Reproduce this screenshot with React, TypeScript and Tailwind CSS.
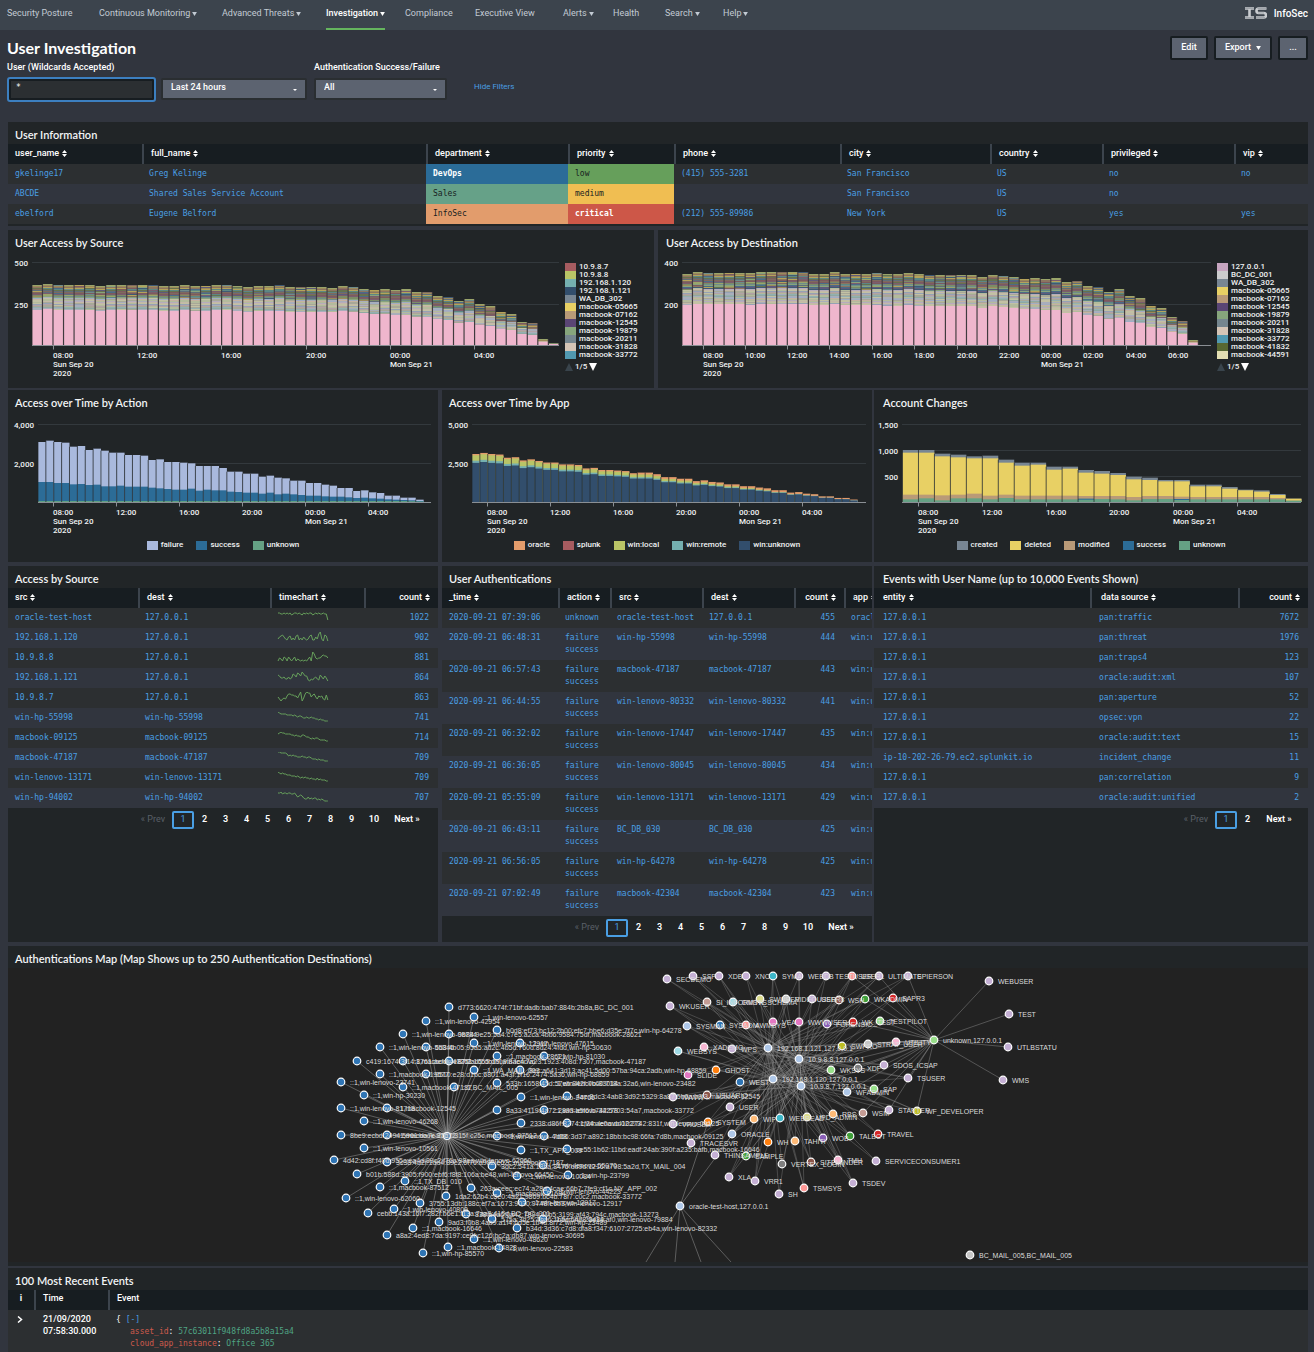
import React from "react";

const MONO = "font-['DejaVu_Sans_Mono',monospace]";

/* ---------- navigation ---------- */

const NAV: { label: string; menu?: boolean; active?: boolean; w: string }[] = [
  { label: "Security Posture", w: "w-[92px]" },
  { label: "Continuous Monitoring", menu: true, w: "w-[123px]" },
  { label: "Advanced Threats", menu: true, w: "w-[104px]" },
  { label: "Investigation", menu: true, active: true, w: "w-[79px]" },
  { label: "Compliance", w: "w-[70px]" },
  { label: "Executive View", w: "w-[88px]" },
  { label: "Alerts", menu: true, w: "w-[50px]" },
  { label: "Health", w: "w-[52px]" },
  { label: "Search", menu: true, w: "w-[58px]" },
  { label: "Help", menu: true, w: "w-[50px]" },
];

function Caret() {
  return (
    <svg viewBox="0 0 6 5" className="mb-px h-[4px] w-[5px]" fill="currentColor" aria-hidden="true">
      <path d="M0 0h6L3 5z" />
    </svg>
  );
}

function Logo() {
  return (
    <svg viewBox="0 0 22 12" className="h-3 w-[22px]" fill="none" aria-hidden="true">
      <path
        d="M0 1.500h9M0 10.500h9M4.500 1v10M21.500 1.500h-8q-2 0-2 2.200t2 2.300h5.500q2 0 2 2.250t-2 2.250h-8"
        stroke="#c9ccd0"
        strokeWidth="2.600"
      />
      <path d="M0 1.500h9M0 10.500h9M12.500 1.500h9M13 6h6M11 10.500h9" stroke="#858b92" strokeWidth="0.600" />
    </svg>
  );
}

function NavBar() {
  return (
    <nav className="flex h-[30px] items-stretch justify-between bg-[#3c444d] pr-[6px] pl-[7px] text-[9px] text-[#c3cbd4]">
      <div className="flex">
        {NAV.map((n) => (
          <div key={n.label} className={`flex ${n.w} shrink-0`}>
            <a
              href="#"
              className={`flex items-center gap-[2px] border-b-2 whitespace-nowrap ${
                n.active ? "border-[#65b55e] font-medium text-white" : "border-transparent"
              }`}
            >
              {n.label}
              {n.menu && <Caret />}
            </a>
          </div>
        ))}
      </div>
      <a href="#" className="flex items-center gap-[7px] pb-1 text-[10px] font-medium text-white">
        <Logo />
        InfoSec
      </a>
    </nav>
  );
}

/* ---------- shared pieces ---------- */

function Panel({ title, children, className = "", pad = "pl-[7px]" }: { title: string; children: React.ReactNode; className?: string; pad?: string }) {
  return (
    <section className={`min-w-0 overflow-hidden bg-[#212527] ${className}`}>
      <h2 className={`h-[22px] ${pad} pt-[5px] font-['Lato',sans-serif] text-[11px] leading-4 font-semibold whitespace-nowrap text-[#f2f4f5]`}>{title}</h2>
      {children}
    </section>
  );
}

function SortIcon() {
  return (
    <svg viewBox="0 0 5 7" className="ml-[3px] inline-block h-[7px] w-[5px] align-[-1px]" fill="currentColor" aria-hidden="true">
      <path d="M0 3h5L2.500 0zM0 4h5L2.500 7z" />
    </svg>
  );
}

type Col = { name: string; w: string; right?: boolean };

function DataTable({ cols, rows, pad = "pl-[7px]", width = "w-full" }: { cols: Col[]; rows: React.ReactNode[][]; pad?: string; width?: string }) {
  return (
    <table className={`${width} table-fixed border-collapse`}>
      <colgroup>
        {cols.map((c) => (
          <col key={c.name} className={c.w} />
        ))}
      </colgroup>
      <thead>
        <tr className="h-5 bg-[#171d21] text-[9px] text-white">
          {cols.map((c, i) => (
            <th key={c.name} scope="col" className="p-0 text-left align-top font-medium">
              <div
                className={`h-5 pt-[3px] leading-3 whitespace-nowrap ${pad} ${i ? "border-l-2 border-[#3c444d]" : ""} ${
                  c.right ? "pr-2 text-right" : ""
                }`}
              >
                {c.name}
                <SortIcon />
              </div>
            </th>
          ))}
        </tr>
      </thead>
      <tbody className={`${MONO} text-[8px] leading-3 text-[#4a9fe3]`}>
        {rows.map((r, k) => (
          <tr key={k} className={k % 2 ? "bg-[#31353e]" : "bg-[#2c2f31]"}>
            {r.map((cell, i) =>
              React.isValidElement(cell) && cell.type === "td" ? (
                cell
              ) : (
                <td key={i} className={`pt-1 pb-1 align-top whitespace-pre ${pad} ${cols[i].right ? "pr-[9px] text-right" : ""}`}>
                  {cell}
                </td>
              )
            )}
          </tr>
        ))}
      </tbody>
    </table>
  );
}

function Pager({ pages, pad = "pr-3" }: { pages: number; pad?: string }) {
  return (
    <nav className={`flex h-6 items-center justify-end ${pad} text-[9px] font-semibold text-white`} aria-label="Pagination">
      <button type="button" disabled className="mr-[7px] font-normal text-[#5a6068]">« Prev</button>
      <button type="button" className="h-[18px] w-[22px] rounded-[2px] border-2 border-[#4a9fe3] font-normal text-[#4a9fe3]">1</button>
      {Array.from({ length: pages - 1 }, (_, i) => (
        <button type="button" key={i} className={`text-center ${i === 8 ? "w-6" : "w-[21px]"}`}>
          {i + 2}
        </button>
      ))}
      <button type="button" className="ml-[2px] w-[38px] text-center whitespace-nowrap">Next »</button>
    </nav>
  );
}

/* ---------- charts ---------- */

type Tick = { x: number; lines: string[] };

function Axis({ x0, x1, base, grid, ticks, step }: { x0: number; x1: number; base: number; grid: [number, string][]; ticks: Tick[]; step: number }) {
  return (
    <g fontSize="8" fill="#f0f2f3" fontWeight="500">
      {grid.map(([y, label]) => (
        <text key={label} x={x0 - 4} y={y + 3} textAnchor="end">
          {label}
        </text>
      ))}
      <path d={`M${x0} ${base}H${x1}`} stroke="#8a8f94" />
      {ticks.map((t) => (
        <g key={t.x}>
          <path d={`M${t.x + 0.5} ${base}v4`} stroke="#8a8f94" />
          {t.lines.map((l, i) => (
            <text key={l} x={t.x} y={base + 12 + i * step}>
              {l}
            </text>
          ))}
        </g>
      ))}
    </g>
  );
}

function Grid({ x0, x1, ys }: { x0: number; x1: number; ys: number[] }) {
  return <path d={ys.map((y) => `M${x0} ${y}H${x1}`).join("")} stroke="#33393d" />;
}

const SUN = ["08:00", "Sun Sep 20", "2020"];
const MON = ["00:00", "Mon Sep 21"];

const DEEP = ["#9aa56a", "#4a6c87", "#7b8c66", "#7f6a5e", "#5c8784", "#9c8a5a", "#5f5a7c", "#6f8c8a", "#7d5a5e", "#65724e", "#8c7560", "#3f5a75", "#88a37c", "#7a5d6e", "#5f6d7a", "#b5a35a"];
const PALE = ["#a9aebb", "#c4b9a8", "#93b0b2", "#b3bb9c", "#b3a2a6", "#a0adc4", "#c2c1a4", "#8ea9a2", "#b6acbd", "#a8a898", "#c6b2a0", "#95a1b5"];

function stripes(seed: number, n: number) {
  let s = seed * 7919 + 17;
  const out: string[] = [];
  for (let i = 0; i < n; i++) {
    s = (s * 1103515245 + 12345) % 2147483648;
    const k = Math.floor(s / 65536);
    const pal = i < n * 0.5 ? DEEP : PALE;
    out.push(pal[(k % 3 === 0 ? k : i * 5) % pal.length]);
  }
  return out;
}

function HostBars({ x0, base, heights, shift }: { x0: number; base: number; heights: number[]; shift: number }) {
  const pitch = 10.54;
  return (
    <g>
      {heights.map((h, i) => {
        if (h <= 0) return null;
        const x = x0 + i * pitch + 0.5;
        const share = i < 30 ? 0.585 - shift - i * 0.0005 : 0.57 - shift - (i - 30) * 0.006;
        const pink = Math.round(h * share);
        const top = base - h;
        const n = Math.max(1, Math.round(h - pink));
        return (
          <g key={i}>
            <rect x={x - 0.5} y={top} width={pitch} height={h} fill="#55494f" opacity="0.75" />
            <rect x={x} y={base - pink} width={pitch - 1.2} height={pink} fill="#efb6cd" />
            {stripes(i + 1, n).map((c, k) => (
              <rect key={k} x={x} y={top + k} width={pitch - 1.2} height="1" fill={c} />
            ))}
          </g>
        );
      })}
    </g>
  );
}

const SRC_TOPS = [171, 168, 171, 171, 171, 171, 174, 171, 171, 171, 171, 171, 174, 174, 171, 174, 174, 171, 171, 174, 177, 174, 174, 171, 177, 177, 177, 177, 180, 174, 177, 182, 186, 183, 186, 183, 192, 192, 204, 207, 219, 213, 228, 235, 252, 258, 282, 286, 333, 346];
const DST_TOPS = [139, 133, 136, 134, 134, 134, 136, 133, 133, 133, 133, 133, 139, 139, 133, 139, 139, 138, 135, 138, 138, 135, 138, 141, 141, 141, 141, 141, 147, 141, 144, 147, 153, 150, 153, 150, 162, 159, 174, 177, 192, 183, 204, 210, 234, 240, 267, 278, 336, 351];
const toHeights = (tops: number[], zero: number) => tops.map((t) => Math.round((zero - t) / 3));

const SRC_LEGEND: [string, string][] = [
  ["10.9.8.7", "#a65c60"], ["10.9.8.8", "#b8c466"], ["192.168.1.120", "#75b0b0"], ["192.168.1.121", "#324e6c"],
  ["WA_DB_302", "#788693"], ["macbook-05665", "#e8d064"], ["macbook-07162", "#b99a77"], ["macbook-12545", "#5a4575"],
  ["macbook-19879", "#86a57c"], ["macbook-20211", "#75868f"], ["macbook-31828", "#d5c5b6"], ["macbook-33772", "#5199b1"],
];
const DST_LEGEND: [string, string][] = [
  ["127.0.0.1", "#c6a5c0"], ["BC_DC_001", "#cbcccd"], ["WA_DB_302", "#788693"], ["macbook-05665", "#e8d064"],
  ["macbook-07162", "#b99a77"], ["macbook-12545", "#5a4575"], ["macbook-19879", "#86a57c"], ["macbook-20211", "#75868f"],
  ["macbook-31828", "#d5c5b6"], ["macbook-33772", "#5199b1"], ["macbook-41832", "#586832"], ["macbook-44591", "#e3deb2"],
];

function SideLegend({ items, width }: { items: [string, string][]; width: string }) {
  return (
    <div className={`${width} shrink-0 pt-[11px] text-[8px] font-medium text-[#f0f2f3]`}>
      <ul>
        {items.map(([label, color]) => (
          <li key={label} className="flex h-2 items-center gap-[3px] leading-[8px] whitespace-nowrap">
            <span className="h-2 w-[11px]" style={{ backgroundColor: color }} />
            {label}
          </li>
        ))}
      </ul>
      <div className="flex h-4 items-center gap-[2px]">
        <button type="button" aria-label="Previous legend page" className="text-[#39444c]">
          <svg viewBox="0 0 8 8" className="size-2" fill="currentColor"><path d="M4 0l4 8H0z" /></svg>
        </button>
        1/5
        <button type="button" aria-label="Next legend page" className="text-white">
          <svg viewBox="0 0 8 8" className="size-2" fill="currentColor"><path d="M4 8L0 0h8z" /></svg>
        </button>
      </div>
    </div>
  );
}

const hours = (xs: number[], labels: string[]): Tick[] =>
  xs.map((x, i) => ({ x, lines: labels[i] === "08:00" ? SUN : labels[i] === "00:00" ? MON : [labels[i]] }));
const FOUR = ["08:00", "12:00", "16:00", "20:00", "00:00", "04:00"];

function SourceChart() {
  return (
    <div className="flex">
      <svg viewBox="8 252 557 136" className="min-w-0 flex-1" role="img" aria-label="User access by source">
        <Grid x0={32} x1={559} ys={[262.5, 304.5]} />
        <HostBars x0={32} base={345} heights={toHeights(SRC_TOPS, 351)} shift={0} />
        <Axis x0={32} x1={559} base={345.5} step={9} grid={[[262.5, "500"], [304.5, "250"]]} ticks={hours([53, 137, 221, 306, 390, 474], FOUR)} />
      </svg>
      <SideLegend items={SRC_LEGEND} width="w-[89px]" />
    </div>
  );
}

function DestinationChart() {
  return (
    <div className="flex">
      <svg viewBox="658 252 559 136" className="min-w-0 flex-1" role="img" aria-label="User access by destination">
        <Grid x0={682} x1={1211} ys={[262.5, 304.5]} />
        <HostBars x0={682} base={345} heights={toHeights(DST_TOPS, 351)} shift={0.02} />
        <Axis
          x0={682}
          x1={1211}
          base={345.5}
          step={9}
          grid={[[262.5, "400"], [304.5, "200"]]}
          ticks={hours(
            [703, 745, 787, 829, 872, 914, 957, 999, 1041, 1083, 1126, 1168],
            ["08:00", "10:00", "12:00", "14:00", "16:00", "18:00", "20:00", "22:00", "00:00", "02:00", "04:00", "06:00"]
          )}
        />
      </svg>
      <SideLegend items={DST_LEGEND} width="w-[91px]" />
    </div>
  );
}

const ACTION_TOPS = [163, 159, 163, 165, 177, 175, 187, 183, 189, 195, 195, 202, 202, 204, 217, 215, 223, 223, 225, 227, 235, 235, 235, 241, 252, 252, 258, 258, 267, 264, 270, 272, 279, 279, 286, 286, 291, 294, 301, 301, 310, 308, 314, 316, 324, 324, 330, 330, 336, 343];
const SUCCESS_TOPS = [283, 283, 286, 286, 290, 289, 292, 291, 296, 296, 294, 297, 297, 297, 300, 302, 304, 306, 306, 303, 309, 306, 308, 308, 312, 313, 315, 315, 318, 315, 320, 318, 320, 322, 324, 324, 326, 327, 327, 329, 331, 330, 332, 333, 335, 336, 337, 338, 340, 343];

/* Each layer gives the height of its upper edge; later layers are painted over earlier ones. */
function Stack({ x0, base, pitch, layers }: { x0: number; base: number; pitch: number; layers: { color: string; h: number[] }[] }) {
  return (
    <g>
      {layers[0].h.map((_, i) => (
        <g key={i}>
          {layers.map((l, k) => (
            <rect key={k} x={x0 + i * pitch} y={base - l.h[i]} width={pitch} height={Math.max(0, l.h[i])} fill={l.color} />
          ))}
          <rect x={x0 + i * pitch - 0.5} y={base - layers[0].h[i]} width="1" height={Math.max(0, layers[0].h[i])} fill="#212527" opacity="0.7" />
        </g>
      ))}
    </g>
  );
}

function BottomLegend({ items }: { items: [string, string][] }) {
  return (
    <ul className="flex h-6 justify-center gap-[13px] pt-[2px] text-[8px] leading-[10px] font-medium text-[#f0f2f3]">
      {items.map(([label, color]) => (
        <li key={label} className="flex h-[10px] items-center gap-[3px]">
          <span className="h-[9px] w-[11px]" style={{ backgroundColor: color }} />
          {label}
        </li>
      ))}
    </ul>
  );
}

function ActionChart() {
  return (
    <>
      <svg viewBox="8 412 430 126" className="block w-full" role="img" aria-label="Access over time by action">
        <Grid x0={38} x1={431} ys={[424.5, 463.5]} />
        <Stack
          x0={38}
          base={502}
          pitch={7.87}
          layers={[
            { color: "#a9b9dd", h: ACTION_TOPS.map((t) => (343 - t) / 3) },
            { color: "#2c6c97", h: SUCCESS_TOPS.map((t) => (343 - t) / 3) },
            { color: "#5fa083", h: SUCCESS_TOPS.map((t) => Math.min(1, (343 - t) / 6)) },
          ]}
        />
        <Axis x0={38} x1={431} base={502.5} step={9} grid={[[424.5, "4,000"], [463.5, "2,000"]]} ticks={hours([53, 116, 179, 242, 305, 368], FOUR)} />
      </svg>
      <BottomLegend items={[["failure", "#a9b9dd"], ["success", "#2c6c97"], ["unknown", "#65a184"]]} />
    </>
  );
}

function AppChart() {
  const total = ACTION_TOPS.map((t) => ((343 - t) / 3) * 0.8);
  return (
    <>
      <svg viewBox="442 412 430 126" className="block w-full" role="img" aria-label="Access over time by app">
        <Grid x0={472} x1={866} ys={[424.5, 463.5]} />
        <Stack
          x0={472}
          base={502}
          pitch={7.87}
          layers={[
            { color: "#e39c6b", h: total.map((t, i) => t + (i > 20 && t > 0 ? 0.6 : 0)) },
            { color: "#b9c466", h: total.map((t) => Math.max(0, t - 1.3)) },
            { color: "#75b0b0", h: total.map((t) => t * 0.86) },
            { color: "#324e6c", h: total.map((t) => t * 0.815) },
          ]}
        />
        <Axis x0={472} x1={866} base={502.5} step={9} grid={[[424.5, "5,000"], [463.5, "2,500"]]} ticks={hours([487, 550, 613, 676, 739, 802], FOUR)} />
      </svg>
      <BottomLegend items={[["oracle", "#e39c6b"], ["splunk", "#a65c60"], ["win:local", "#b9c466"], ["win:remote", "#75b0b0"], ["win:unknown", "#324e6c"]]} />
    </>
  );
}

const CREATED = [187, 187, 198, 201, 206, 204, 216, 225, 225, 237, 237, 247, 250, 256, 267, 270, 277, 277, 291, 291, 298, 306, 308, 319, 333];
const DELETED = [195, 195, 206, 209, 212, 212, 225, 234, 231, 246, 243, 255, 258, 262, 275, 277, 281, 281, 296, 296, 303, 308, 312, 322, 333];
const MODIFIED = [321, 321, 323, 321, 318, 324, 321, 324, 324, 324, 324, 325, 325, 325, 328, 325, 325, 327, 328, 328, 328, 328, 328, 331, 339];
const UNKNOWN = [335, 332, 338, 332, 332, 335, 331, 335, 335, 335, 335, 336, 334, 335, 338, 334, 334, 337, 335, 335, 335, 335, 335, 335, 339];

function ChangesChart() {
  const h = (a: number[]) => a.map((t) => (343 - t) / 3);
  return (
    <>
      <svg viewBox="874 412 434 126" className="block w-full" role="img" aria-label="Account changes">
        <Grid x0={902} x1={1301} ys={[424.5, 450.5, 476.5]} />
        <Stack
          x0={902.5}
          base={502}
          pitch={15.96}
          layers={[
            { color: "#788693", h: h(CREATED) },
            { color: "#e8d064", h: h(DELETED) },
            { color: "#b99a77", h: h(MODIFIED) },
            { color: "#2c6c97", h: h(UNKNOWN).map((v, i) => (i === 11 || i === 17 ? v + 1 : 0)) },
            { color: "#65a184", h: h(UNKNOWN) },
          ]}
        />
        <Axis x0={902} x1={1301} base={502.5} step={9} grid={[[424.5, "1,500"], [450.5, "1,000"], [476.5, "500"]]} ticks={hours([918, 982, 1046, 1109, 1173, 1237], FOUR)} />
      </svg>
      <BottomLegend items={[["created", "#788693"], ["deleted", "#e8d064"], ["modified", "#b99a77"], ["success", "#2c6c97"], ["unknown", "#65a184"]]} />
    </>
  );
}

/* ---------- tables ---------- */

function fill(text: string, cls: string) {
  return (
    <td key={text} className={`pt-1 pb-1 pl-[7px] align-top ${cls}`}>
      {text}
    </td>
  );
}

const USER_COLS: Col[] = [
  { name: "user_name", w: "w-[134px]" },
  { name: "full_name", w: "w-[284px]" },
  { name: "department", w: "w-[142px]" },
  { name: "priority", w: "w-[106px]" },
  { name: "phone", w: "w-[166px]" },
  { name: "city", w: "w-[150px]" },
  { name: "country", w: "w-[112px]" },
  { name: "privileged", w: "w-[132px]" },
  { name: "vip", w: "w-[74px]" },
];
const USER_ROWS: React.ReactNode[][] = [
  ["gkelinge17", "Greg Kelinge", fill("DevOps", "bg-[#2b6c98] font-bold text-white"), fill("low", "bg-[#669f5b] text-[#171d21]"), "(415) 555-3281", "San Francisco", "US", "no", "no"],
  ["ABCDE", "Shared Sales Service Account", fill("Sales", "bg-[#66a188] text-[#171d21]"), fill("medium", "bg-[#f0be52] text-[#171d21]"), "", "San Francisco", "US", "no", ""],
  ["ebelford", "Eugene Belford", fill("InfoSec", "bg-[#e29c6c] text-[#171d21]"), fill("critical", "bg-[#cd5748] font-bold text-white"), "(212) 555-89986", "New York", "US", "yes", "yes"],
];

const SPARKS = [
  [1, 1, 2, 2, 1, 2, 1, 2, 1, 3, 2, 1, 1, 2, 1, 2, 3, 1, 2, 1, 2, 1, 1, 3, 2, 1, 2, 1, 2, 2, 1, 2, 2, 8],
  [7, 5, 4, 3, 5, 7, 8, 5, 4, 8, 6, 8, 4, 3, 8, 6, 8, 5, 7, 8, 7, 4, 3, 8, 8, 5, 7, 2, 0, 7, 9, 3, 4, 9],
  [9, 6, 7, 9, 5, 6, 9, 5, 7, 9, 7, 5, 9, 7, 8, 9, 8, 9, 8, 9, 7, 5, 9, 0, 2, 6, 7, 6, 6, 4, 3, 4, 4, 6],
  [3, 4, 6, 6, 5, 7, 7, 5, 7, 6, 2, 3, 5, 1, 2, 4, 0, 2, 4, 4, 8, 9, 7, 8, 6, 5, 7, 8, 3, 5, 7, 4, 6, 9],
  [5, 7, 9, 7, 6, 7, 4, 2, 2, 3, 3, 4, 4, 6, 3, 0, 9, 6, 2, 0, 1, 1, 5, 3, 2, 5, 7, 4, 5, 4, 7, 8, 3, 8],
  [0, 1, 2, 2, 2, 2, 3, 3, 3, 3, 4, 3, 4, 5, 4, 4, 5, 6, 6, 5, 6, 6, 5, 6, 6, 7, 7, 8, 7, 8, 8, 9, 9, 9],
  [2, 1, 0, 1, 1, 2, 2, 2, 2, 3, 3, 4, 3, 4, 4, 5, 3, 3, 4, 5, 5, 6, 7, 6, 7, 6, 6, 7, 8, 8, 8, 8, 9, 9],
  [0, 0, 1, 1, 1, 1, 2, 4, 3, 4, 3, 4, 4, 5, 5, 5, 4, 5, 5, 6, 5, 5, 6, 7, 7, 7, 8, 7, 8, 8, 8, 9, 9, 9],
  [0, 1, 2, 1, 2, 2, 3, 3, 3, 4, 4, 4, 5, 4, 5, 6, 5, 6, 5, 6, 6, 7, 6, 7, 7, 8, 6, 8, 7, 8, 8, 8, 9, 9],
  [1, 1, 0, 2, 1, 1, 2, 1, 1, 2, 2, 1, 3, 5, 4, 3, 4, 6, 7, 7, 5, 7, 6, 7, 6, 6, 8, 7, 8, 7, 8, 9, 9, 9],
];

function Spark({ v }: { v: number[] }) {
  return (
    <svg viewBox="0 0 52 12" className="h-3 w-[52px]" fill="none" stroke="#669f5b" aria-hidden="true">
      <polyline points={v.map((y, i) => `${1 + i * 1.51},${y}`).join(" ")} />
    </svg>
  );
}

const SOURCES: [string, string, string][] = [
  ["oracle-test-host", "127.0.0.1", "1022"], ["192.168.1.120", "127.0.0.1", "902"], ["10.9.8.8", "127.0.0.1", "881"],
  ["192.168.1.121", "127.0.0.1", "864"], ["10.9.8.7", "127.0.0.1", "863"], ["win-hp-55998", "win-hp-55998", "741"],
  ["macbook-09125", "macbook-09125", "714"], ["macbook-47187", "macbook-47187", "709"],
  ["win-lenovo-13171", "win-lenovo-13171", "709"], ["win-hp-94002", "win-hp-94002", "707"],
];

const AUTHS: [string, string, string, string][] = [
  ["07:39:06", "oracle-test-host", "127.0.0.1", "455"], ["06:48:31", "win-hp-55998", "win-hp-55998", "444"],
  ["06:57:43", "macbook-47187", "macbook-47187", "443"], ["06:44:55", "win-lenovo-80332", "win-lenovo-80332", "441"],
  ["06:32:02", "win-lenovo-17447", "win-lenovo-17447", "435"], ["06:36:05", "win-lenovo-80045", "win-lenovo-80045", "434"],
  ["05:55:09", "win-lenovo-13171", "win-lenovo-13171", "429"], ["06:43:11", "BC_DB_030", "BC_DB_030", "425"],
  ["06:56:05", "win-hp-64278", "win-hp-64278", "425"], ["07:02:49", "macbook-42304", "macbook-42304", "423"],
];

const EVENTS: string[][] = [
  ["127.0.0.1", "pan:traffic", "7672"], ["127.0.0.1", "pan:threat", "1976"], ["127.0.0.1", "pan:traps4", "123"],
  ["127.0.0.1", "oracle:audit:xml", "107"], ["127.0.0.1", "pan:aperture", "52"], ["127.0.0.1", "opsec:vpn", "22"],
  ["127.0.0.1", "oracle:audit:text", "15"], ["ip-10-202-26-79.ec2.splunkit.io", "incident_change", "11"],
  ["127.0.0.1", "pan:correlation", "9"], ["127.0.0.1", "oracle:audit:unified", "2"],
];

/* ---------- authentications map ---------- */

type Host = [number, number, string];
const CENTER: [number, number] = [447, 1136];
const HOSTS: Host[] = [
  [449, 1007, "d773:6620:474f:71bf:dadb:bab7:884b:2b8a,BC_DC_001"],
  [474, 1017, "::1,win-lenovo-62557"], [426, 1021, "::1,win-lenovo-42954"],
  [497, 1030, "b0d8:ef73:bc12:2b00:efc7:bbe6:d35e:7f7c,win-hp-64278"],
  [403, 1034, "::1,win-lenovo-08784"], [449, 1034, "9b84:9e25:5a4:c7e5:a2ca:4bb6:9584:75df,macbook-28621"],
  [474, 1043, "::1,win-lenovo-12917"], [520, 1043, "::1,win-lenovo-47615"], [380, 1047, "::1,win-lenovo-55346"],
  [426, 1047, "6d8:4b05:95a5:ad2c:4b5d:760d:8d24:4fdd,win-hp-30630"],
  [497, 1056, "::1,macbook-28621"], [544, 1056, "::1,win-hp-81030"],
  [357, 1061, "c419:1674:3f14:8761:aefd:4e87:2ad5:db19,win-lenovo"],
  [403, 1061, "::1,macbook-47261"], [449, 1061, "87f2:1655:db19:8ac4:7a23:1923:408d:7307,macbook-47187"],
  [380, 1074, "::1,macbook-19577"], [426, 1074, "9510:e28:d1bc:6801:a43f:1f16:2474:5a36,win-hp-68859"],
  [474, 1070, "::1,WA_MAIL_003"], [520, 1070, "8ec:a641:3d13:ac41:5d00:57ba:94ca:2adb,win-hp-68859"],
  [341, 1082, "::1,win-lenovo-23741"], [403, 1087, "::1,macbook-47187"], [454, 1087, "::1,BC_MAIL_005"],
  [497, 1083, "533b:1658:45d:57eb:842f:7b60:718a:32a6,win-lenovo-23482"], [544, 1083, "::1,win-lenovo-83014"],
  [364, 1095, "::1,win-hp-30230"], [521, 1097, "::1,win-lenovo-24766"],
  [567, 1096, "4ae:8dc3:4ab8:3d92:5329:8a87:5b6a:b9f3,macbook-12545"],
  [341, 1108, "::1,win-lenovo-81718"], [387, 1108, "::1,macbook-12545"],
  [497, 1110, "8a33:4119:4a72:2893:a5f6:b742:5703:54a7,macbook-33772"], [544, 1110, "::1,win-lenovo-34278"],
  [364, 1121, "::1,win-lenovo-46268"], [521, 1123, "2338:d86f:8274:cf24:ae0a:dd02:2742:831f,win-lenovo-09125"],
  [567, 1123, "::1,win-lenovo-10273"], [341, 1135, "8be9:ecbd:2494:5961:da7e:25c7:315f:c25c,macbook-87512"],
  [387, 1135, "::1,macbook-87512"], [497, 1136, "::1,win-lenovo-4d08"],
  [544, 1136, "7d66:3d37:a892:18bb:bc98:66fa:7d8b,macbook-09125"],
  [364, 1148, "::1,win-lenovo-10561"], [521, 1150, "::1,TX_APP_009"],
  [567, 1149, "ce55:1b62:11bd:eadf:24ab:390f:a235:bafb,macbook-16646"],
  [334, 1160, "4d42:cd8f:f40d:955c:ea4d:89c2:f76a:98ea,win-lenovo-62060"],
  [387, 1162, "3c38:4d2f:1dd4:89c2:6f76:a982:e62c,macbook-47187"],
  [492, 1166, "3dc2:541a:18ba:8475:dd9d:1216:a798:5a2d,TX_MAIL_004"], [543, 1165, "::1,win-lenovo-55070"],
  [357, 1174, "b01b:588d:3905:f900:ebf6:f8f8:106a:be48,win-lenovo-66450"],
  [517, 1176, "::1,win-lenovo-10084"], [568, 1175, "::1,win-hp-23799"], [405, 1181, "::1,TX_DB_010"],
  [380, 1187, "::1,macbook-87512"], [471, 1188, "263a:ceec:ec74:a28a:4cae:66b7:7fe9:cf1c,NY_APP_002"],
  [497, 1193, "::1,macbook-81684"], [547, 1191, "::1,win-lenovo-44223"], [346, 1198, "::1,win-lenovo-62060"],
  [446, 1196, "1da2:62b4:c5e0:4a21:9869:bc4b:78f7:c0c2,macbook-33772"],
  [420, 1203, "3755:13db:188c:ef7a:1673:9030:9748:e6b3,win-lenovo-12917"], [522, 1202, "::1,win-lenovo-12917"],
  [394, 1209, "::1,win-lenovo-40800"], [368, 1213, "cebb:143a:16f7:282f:b6e1:f13a:7aa8:415d,BC_DC_001"],
  [466, 1214, "838:b4a6:0a42:7894:11b5:3199:af43:794c,macbook-13273"],
  [492, 1219, "575a:3d25:4ba6:1b5c:5478:6e14:af0,win-lenovo-79884"], [543, 1219, "::1,win-hp-23489"],
  [439, 1222, "9ad3:f0b8:4ab9:a1f4:6d5e:1b4d:8f72,win-hp-23489"], [413, 1228, "::1,macbook-16646"],
  [517, 1228, "b34d:3d36:c7d8:dfa8:f347:6107:2725:eb4a,win-lenovo-82332"],
  [387, 1235, "a8a2:4ed8:7da:9197:ce9f:c126:bc2a:db87,win-lenovo-30695"],
  [474, 1239, "::1,win-lenovo-48620"], [448, 1247, "::1,macbook-14828"], [499, 1248, "::1,win-lenovo-22583"],
  [423, 1253, "::1,win-hp-85570"],
];

const LAV = "#c5b0d5", LBLUE = "#aec7e8", BLUE = "#2f75b5", CYAN = "#3db7c9", LCYAN = "#9edae5", PINK = "#e377c2", LPINK = "#f7b6d2";
const ORANGE = "#ff7f0e", LORANGE = "#ffbb78", GREEN = "#3f9f3a", LGREEN = "#98df8a", RED = "#d62728", SALMON = "#ff9896";
const BROWN = "#8c564b", LBROWN = "#c49c94", OLIVE = "#bcbd22", LOLIVE = "#dbdb8d", GREY = "#7f7f7f", LGREY = "#c7c7c7", PURPLE = "#8a5fb8";

type Account = [number, number, string, string];
const ACCOUNTS: Account[] = [
  [667, 979, "SECDEMO", LAV], [693, 976, "SSP", LAV], [719, 976, "XDB", LAV], [746, 976, "XNC", LAV], [773, 976, "SYMA", CYAN],
  [799, 976, "WEBDB", LAV], [826, 976, "TESTUSER", LAV], [852, 976, "USER1", SALMON], [879, 976, "ULTIMATE", LAV], [908, 976, "SPIERSON", LAV],
  [670, 1006, "WKUSER", LAV], [707, 1002, "SI_INFORMTN_SCHEMA", LBROWN], [733, 1002, "DMSYS", LCYAN], [760, 999, "SWUSER", LOLIVE],
  [786, 999, "VIDEOUSER", LGREY], [812, 999, "USER8", LAV], [839, 1000, "WSH", BROWN], [865, 999, "WKADMIN", GREEN], [893, 998, "SAPR3", RED],
  [687, 1026, "SYSMAN", LBLUE], [720, 1025, "SYSADM", BLUE], [746, 1025, "AWMSYS", SALMON], [773, 1022, "VEA", PINK], [799, 1022, "WWWUSER", PINK],
  [827, 1024, "FORENSIC", PURPLE], [853, 1022, "WK_TEST", RED], [880, 1021, "TESTPILOT", LGREEN],
  [678, 1051, "WEBSYS", LCYAN], [704, 1047, "XADEMO", LPINK], [732, 1049, "WPS", LAV], [842, 1046, "SWPRO", OLIVE], [868, 1044, "STRAT_USER", LGREY],
  [896, 1042, "UTILITY", LPINK], [688, 1075, "SLIDE", PINK], [716, 1070, "GHOST", ORANGE], [831, 1070, "WKSYS", LGREEN], [858, 1068, "XDP", GREY],
  [884, 1065, "SDOS_ICSAP", LAV], [740, 1082, "WEST", BLUE], [847, 1092, "WFADMIN", LBLUE], [874, 1089, "SAP", LGREEN], [908, 1078, "TSUSER", LAV],
  [673, 1097, "IWWW", LAV], [707, 1095, "USUARIO", BROWN], [730, 1107, "USER", LAV], [673, 1124, "VRUSER", LAV], [708, 1122, "SYSTEM", ORANGE],
  [754, 1119, "WIP", LORANGE], [780, 1118, "WEBREAD", CYAN], [807, 1117, "UPD_ADMIN", LOLIVE], [833, 1114, "RBS", LORANGE], [863, 1113, "WSM", LBROWN],
  [889, 1110, "STARTER", LAV], [917, 1111, "WF_DEVELOPER", OLIVE], [691, 1143, "TRACESVR", LAV], [732, 1134, "ORACLE", LBLUE], [768, 1142, "WH", ORANGE],
  [795, 1141, "TAHITI", LORANGE], [823, 1138, "WOB", PURPLE], [850, 1136, "TALBOT", GREEN], [878, 1134, "TRAVEL", RED], [715, 1155, "THINSAMPLE", LAV],
  [746, 1156, "SAMPLE", GREEN], [782, 1164, "VERTEX_LOGIN", GREY], [811, 1162, "SITEMINDER", BROWN], [838, 1160, "TMH", LPINK],
  [876, 1161, "SERVICECONSUMER1", LAV], [729, 1177, "XLA", LAV], [755, 1181, "VRR1", LAV], [779, 1194, "SH", LAV], [804, 1188, "TSMSYS", SALMON], [853, 1183, "TSDEV", LAV],
];
const HUBS: Account[] = [
  [768, 1048, "192.168.1.121,127.0.0.1", LBLUE], [799, 1059, "10.9.8.8,127.0.0.1", LBLUE],
  [773, 1079, "192.168.1.120,127.0.0.1", LBLUE], [801, 1086, "10.9.8.7,127.0.0.1", LBLUE],
];
const GATE: Account = [934, 1040, "unknown,127.0.0.1", LGREEN];
const ORACLE_HOST: Account = [680, 1206, "oracle-test-host,127.0.0.1", LBLUE];
const REMOTE: Account[] = [[989, 981, "WEBUSER", LAV], [1009, 1014, "TEST", LAV], [1008, 1047, "UTLBSTATU", LAV], [1003, 1080, "WMS", LAV]];
const LONE: Account = [970, 1255, "BC_MAIL_005,BC_MAIL_005", LGREY];

function line(a: readonly (number | string)[], b: readonly (number | string)[]) {
  return `M${a[0]} ${a[1]}L${b[0]} ${b[1]}`;
}

function AuthMap() {
  const spokes = HOSTS.map((h) => line(CENTER, h)).join("");
  const mesh = ACCOUNTS.map((a, i) => line(a, HUBS[i % 4]) + line(a, HUBS[(i * 3 + 1) % 4]) + (i % 3 ? line(a, HUBS[(i + 2) % 4]) : "")).join("");
  const gate =
    REMOTE.map((r) => line(GATE, r)).join("") +
    HUBS.map((h) => line(GATE, h)).join("") +
    ACCOUNTS.filter((a) => a[0] > 840 && a[1] < 1120).map((a) => line(GATE, a)).join("");
  const oracle =
    [[646, 1262], [675, 1262], [701, 1262], [731, 1262], HUBS[2], [708, 1122]].map((p) => line(ORACLE_HOST, p)).join("");
  const dots = [...ACCOUNTS, ...HUBS, GATE, ORACLE_HOST, ...REMOTE, LONE];
  return (
    <svg viewBox="8 968 1300 294" className="block w-full bg-[#222222]" role="img" aria-label="Authentications map">
      <g stroke="#9a9a9a" fill="none">
        <path d={spokes} strokeOpacity="0.5" />
        <path d={mesh} strokeOpacity="0.32" />
        <path d={gate} strokeOpacity="0.42" />
        <path d={oracle} strokeOpacity="0.5" />
      </g>
      <g stroke="#ffffff" strokeWidth="1.2">
        {HOSTS.map(([x, y]) => (
          <circle key={`${x}-${y}`} cx={x} cy={y} r="3.800" fill={BLUE} />
        ))}
        <circle cx={CENTER[0]} cy={CENTER[1]} r="3.500" fill={BLUE} fillOpacity="0.7" />
        {dots.map(([x, y, , c]) => (
          <circle key={`${x}-${y}`} cx={x} cy={y} r="3.800" fill={c} />
        ))}
      </g>
      <g fontSize="7" fill="#dcdcdc" fontFamily="'Liberation Sans', Arial, sans-serif">
        {HOSTS.map(([x, y, t]) => (
          <text key={`${x}-${y}`} x={x + 9} y={y + 3}>{t}</text>
        ))}
        {dots.map(([x, y, t]) => (
          <text key={`${x}-${y}`} x={x + 9} y={y + 3}>{t}</text>
        ))}
      </g>
    </svg>
  );
}

/* ---------- page ---------- */

const BTN = "flex h-[24px] items-center justify-center rounded-[2px] border-2 border-[#171d21] bg-[#5c6370] text-[9px] font-medium text-white";

function Dropdown({ id, label, options, width }: { id: string; label: string; options: string[]; width: string }) {
  return (
    <div className={`relative ${width}`}>
      <select id={id} aria-label={label} className="block h-[22px] w-full appearance-none rounded-[2px] border-2 border-[#2a2e31] bg-[#5c6370] pb-[3px] pl-2 text-[9px] font-medium text-white">
        {options.map((o) => (
          <option key={o}>{o}</option>
        ))}
      </select>
      <svg viewBox="0 0 4 2" className="pointer-events-none absolute top-[11px] right-[10px] h-[2px] w-1" fill="#fff" aria-hidden="true">
        <path d="M0 0h4L2 2z" />
      </svg>
    </div>
  );
}

export default function App() {
  return (
    <div className="overflow-x-hidden bg-[#31353e] font-['Roboto',sans-serif] text-white">
      <NavBar />

      <header className="flex h-[92px] items-start justify-between pr-[6px] pl-[7px]">
        <div>
          <h1 className="mt-[9px] font-['Lato',sans-serif] text-[16px] leading-[18px] font-bold">User Investigation</h1>
          <form className="mt-1 flex items-end text-[9px]">
            <div className="w-[149px]">
              <label htmlFor="user" className="block pb-1 leading-3 font-medium whitespace-nowrap">User (Wildcards Accepted)</label>
              <input
                id="user"
                defaultValue="*"
                className={`block h-[25px] w-full rounded-[3px] border-2 border-[#3c7fc0] bg-[#2b2f32] pb-1 pl-[7px] ${MONO} text-[8px] text-white shadow-[inset_0_0_0_2px_#171d21] outline-none`}
              />
            </div>
            <div className="mb-[2px] ml-[5px]">
              <Dropdown id="range" label="Time range" options={["Last 24 hours", "Last 7 days"]} width="w-[146px]" />
            </div>
            <div className="mb-[2px] ml-[7px]">
              <label htmlFor="result" className="block pb-[5px] leading-3 font-medium whitespace-nowrap">Authentication Success/Failure</label>
              <Dropdown id="result" label="Authentication Success/Failure" options={["All", "success", "failure"]} width="w-[133px]" />
            </div>
            <a href="#" className="mb-[9px] ml-[27px] text-[8px] leading-3 whitespace-nowrap text-[#4a9fe3]">Hide Filters</a>
          </form>
        </div>
        <div className="mt-[6px] flex gap-[6px]">
          <button type="button" className={`${BTN} w-[38px]`}>Edit</button>
          <button type="button" className={`${BTN} w-[58px] gap-[5px]`}>Export <Caret /></button>
          <button type="button" aria-label="More" className={`${BTN} w-[30px]`}>...</button>
        </div>
      </header>

      <main className="pr-[6px] pl-2">
        <Panel title="User Information" className="pb-[2px]">
          <DataTable cols={USER_COLS} rows={USER_ROWS} />
        </Panel>

        <div className="mt-1 flex items-stretch">
          <Panel title="User Access by Source" className="mr-1 flex-[646]"><SourceChart /></Panel>
          <Panel title="User Access by Destination" pad="pl-2" className="flex-[650]"><DestinationChart /></Panel>
        </div>

        <div className="mt-[2px] flex items-stretch">
          <Panel title="Access over Time by Action" className="mr-1 flex-[430]"><ActionChart /></Panel>
          <Panel title="Access over Time by App" className="mr-[2px] flex-[430]"><AppChart /></Panel>
          <Panel title="Account Changes" pad="pl-[9px]" className="flex-[434]"><ChangesChart /></Panel>
        </div>

        <div className="mt-1 flex items-stretch">
          <Panel title="Access by Source" className="mr-1 flex-[430]">
            <DataTable
              cols={[
                { name: "src", w: "w-[130px]" },
                { name: "dest", w: "w-[132px]" },
                { name: "timechart", w: "w-[94px]" },
                { name: "count", w: "w-[74px]", right: true },
              ]}
              rows={SOURCES.map(([s, d, c], i) => [s, d, <Spark key="s" v={SPARKS[i]} />, c])}
            />
            <Pager pages={10} />
          </Panel>
          <Panel title="User Authentications" className="mr-[2px] flex-[430]">
            <div className="overflow-hidden">
              <DataTable
                width="w-[110%]"
                cols={[
                  { name: "_time", w: "w-[116px]" },
                  { name: "action", w: "w-[52px]" },
                  { name: "src", w: "w-[92px]" },
                  { name: "dest", w: "w-[92px]" },
                  { name: "count", w: "w-[50px]", right: true },
                  { name: "app", w: "w-[71px]" },
                ]}
                rows={AUTHS.map(([t, s, d, c], i) => [
                  `2020-09-21 ${t}`,
                  i ? "failure\nsuccess" : "unknown",
                  s,
                  d,
                  c,
                  i ? "win:unknown" : "oracle",
                ])}
              />
            </div>
            <Pager pages={10} />
            <div className="h-[2px]" />
          </Panel>
          <Panel title="Events with User Name (up to 10,000 Events Shown)" pad="pl-[9px]" className="flex-[434]">
            <DataTable
              pad="pl-[9px]"
              cols={[
                { name: "entity", w: "w-[216px]" },
                { name: "data source", w: "w-[148px]" },
                { name: "count", w: "w-[70px]", right: true },
              ]}
              rows={EVENTS}
            />
            <Pager pages={2} pad="pr-[10px]" />
          </Panel>
        </div>

        <Panel title="Authentications Map (Map Shows up to 250 Authentication Destinations)" className="mt-1 pb-1">
          <AuthMap />
        </Panel>

        <Panel title="100 Most Recent Events" className="mt-[2px]">
          <table className="w-full table-fixed border-collapse text-[9px] leading-3">
            <colgroup>
              <col className="w-[27px]" />
              <col className="w-[74px]" />
              <col />
            </colgroup>
            <thead>
              <tr className="h-5 bg-[#171d21] text-left">
                <th scope="col" className="p-0 pb-1 text-center font-bold">i</th>
                <th scope="col" className="border-l-2 border-[#3c444d] p-0 pb-1 pl-[7px] font-medium">Time</th>
                <th scope="col" className="border-l-2 border-[#3c444d] p-0 pb-1 pl-[7px] font-medium">Event</th>
              </tr>
            </thead>
            <tbody>
              <tr className="bg-[#2c2f31] align-top">
                <td className="pt-[6px] pl-[9px]">
                  <button type="button" aria-label="Expand event" className="block">
                    <svg viewBox="0 0 6 7" className="h-[7px] w-[6px]" fill="none" stroke="#fff" strokeWidth="1.5"><path d="M1 .5l3.500 3L1 6.500" /></svg>
                  </button>
                </td>
                <td className="pt-[3px] pl-2 font-medium">21/09/2020<br />07:58:30.000</td>
                <td className={`pt-1 pb-[2px] pl-[7px] ${MONO} text-[8px] whitespace-pre`}>
                  <div>{"{ "}<a href="#" className="text-[#4a9fe3]">[-]</a></div>
                  <div className="pl-[14px]"><span className="text-[#cd5a4c]">asset_id</span>: <span className="text-[#4fa484]">57c63011f948fd8a5b8a15a4</span></div>
                  <div className="pl-[14px]"><span className="text-[#cd5a4c]">cloud_app_instance</span>: <span className="text-[#4fa484]">Office 365</span></div>
                </td>
              </tr>
            </tbody>
          </table>
        </Panel>
      </main>
    </div>
  );
}
